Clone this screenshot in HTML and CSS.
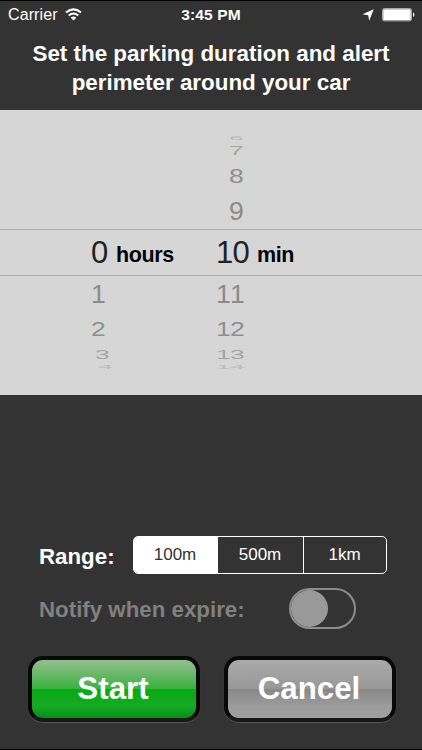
FILE: index.html
```html
<!DOCTYPE html>
<html lang="en">
<head>
<meta charset="utf-8">
<title>Parking timer</title>
<link rel="stylesheet" href="styles.css">
</head>
<body>
<main class="screen">
  <header class="status">
    <div class="carrier"><span class="carrier-name">Carrier</span>
      <svg class="wifi" width="17" height="13" viewBox="0 0 17 13" fill="none" stroke="#fff" stroke-width="2"><path d="M1 4.5Q8.5-1.8 16 4.5M3.7 7.5Q8.5 3.4 13.3 7.5"/><path d="M5.7 9.7Q8.5 7.2 11.3 9.7L8.5 12.6Z" fill="#fff" stroke="none"/></svg>
    </div>
    <div class="time">3:45 PM</div>
    <div class="indicators">
      <svg width="12" height="12" viewBox="0 0 12 12"><path d="M11.7.3L7.2 11.7L6.2 6.2L.5 5.3Z" fill="#fff"/></svg>
      <svg width="33" height="14" viewBox="0 0 33 14"><rect x=".5" y=".5" width="29" height="12.4" rx="1.8" fill="none" stroke="#aaa"/><rect x="1.2" y="1.2" width="27.6" height="11" rx="1" fill="#fff"/><path d="M31 4.6Q32.4 4.8 32.4 6.7T31 8.8Z" fill="#fff"/></svg>
    </div>
  </header>
  <h1 class="title">Set the parking duration and alert<br>perimeter around your car</h1>
  <section class="picker">
    <div class="row r-far2"><span></span><span></span><span class="num single">6</span></div>
    <div class="row r-far"><span></span><span></span><span class="num single">7</span></div>
    <div class="row r-mid"><span></span><span></span><span class="num single">8</span></div>
    <div class="row r-near"><span></span><span></span><span class="num single">9</span></div>
    <div class="row selected"><span class="num">0</span><span class="unit">hours</span><span class="num">10</span><span class="unit">min</span></div>
    <div class="row r-near"><span class="num">1</span><span></span><span class="num">11</span></div>
    <div class="row r-mid"><span class="num">2</span><span></span><span class="num">12</span></div>
    <div class="row r-far"><span class="num in1">3</span><span></span><span class="num">13</span></div>
    <div class="row r-far2"><span class="num in2">4</span><span></span><span class="num">14</span></div>
  </section>
  <section class="options">
    <div class="option range"><span class="label label-range">Range:</span>
      <div class="segments"><span class="seg on">100m</span><span class="seg">500m</span><span class="seg">1km</span></div>
    </div>
    <div class="option notify"><span class="label label-notify">Notify when expire:</span><span class="switch"><span class="knob"></span></span></div>
  </section>
  <footer class="actions">
    <button class="btn start"><span>Start</span></button>
    <button class="btn cancel"><span>Cancel</span></button>
  </footer>
</main>
</body>
</html>
```
FILE: styles.css
```css
* { box-sizing: border-box; }
body { margin: 0; background: #333; font-family: "Liberation Sans", Arial, sans-serif; color: #fff; }
.screen { width: 422px; height: 750px; display: flex; flex-direction: column; background: #333; border-top: 1px solid #000; border-bottom: 1px solid #000; overflow: hidden; }
.status { height: 28px; display: grid; grid-template-columns: 1fr auto 1fr; align-items: center; padding: 0 7px 0 8px; font-size: 16px; line-height: 28px; }
.carrier { display: flex; align-items: center; gap: 7px; }
.carrier-name { letter-spacing: .1px; }
.wifi { margin-top: -2px; }
.time { font-weight: bold; font-size: 15.5px; letter-spacing: .1px; padding-right: 1px; }
.indicators { display: flex; justify-content: flex-end; align-items: center; gap: 8px; }
.title { height: 81px; margin: 0; padding-top: 10px; text-align: center; font-size: 22.4px; line-height: 29px; white-space: nowrap; }
.picker { height: 285px; padding-top: 24px; background: #d6d6d6; color: #222; flex: none; }
.row { display: grid; grid-template-columns: 25px 100px 41px 1fr; grid-template-rows: 100%; padding-left: 91px; align-items: center; }
.num { font-size: 26.5px; line-height: 30px; letter-spacing: -.8px; white-space: nowrap; font-kerning: none; }
.single { padding-left: 13px; }
.in1 { padding-left: 4px; }
.in2 { padding-left: 7px; }
.r-near { height: 36px; color: #8b8b8b; }
.r-near .num { transform: scaleY(.96); }
.r-mid { height: 34px; color: #8f8f8f; }
.r-mid .num { transform: scaleY(.78); }
.r-far { height: 17px; color: #a5a5a5; }
.r-far .num { transform: scaleY(.47); }
.r-far2 { height: 8px; color: #bbb; }
.r-far2 .num { transform: scaleY(.17); }
.selected { height: 47px; border: solid #ababab; border-width: 1px 0; }
.selected .num { font-size: 31px; padding-top: 1px; }
.unit { color: #000; font-weight: bold; font-size: 21.5px; letter-spacing: -.4px; padding-top: 6px; }
.options { height: 261px; padding: 141px 35px 0 39px; flex: none; }
.option { display: flex; align-items: center; justify-content: space-between; }
.label { font-weight: bold; font-size: 22.3px; padding-top: 4px; }
.label-notify { padding-top: 2px; }
.segments { width: 254px; height: 38px; border: 1px solid #fff; border-radius: 5px; display: grid; grid-template-columns: 83px 86px 1fr; overflow: hidden; }
.seg { display: flex; align-items: center; justify-content: center; font-size: 17px; border-left: 1px solid #fff; padding-right: 1px; }
.seg.on { background: #fff; color: #333; border: 0; }
.notify { margin-top: 14px; padding-right: 31px; color: #808080; }
.switch { width: 67px; height: 41px; border: 2px solid #8d8d8d; border-radius: 21px; }
.knob { display: block; width: 37px; height: 37px; border-radius: 50%; background: #999; }
.actions { display: flex; gap: 24px; padding: 0 26px 0 28px; }
.btn { width: 172px; height: 66px; border: 4px solid #080808; border-bottom-color: #181818; border-radius: 15px; padding: 0; color: #fff; font: bold 31.3px "Liberation Sans", Arial, sans-serif; box-shadow: 0 1px 1px #555; }
.btn span { margin-left: -2px; }
.start { background: linear-gradient(#96bf90 0%, #3db142 49%, #08a914 51%, #16aa23 80%, #078d18 100%); }
.cancel { background: linear-gradient(#aaa 0%, #989898 49%, #888 51%, #9c9c9c 80%, #a0a0a0 100%); }
```
